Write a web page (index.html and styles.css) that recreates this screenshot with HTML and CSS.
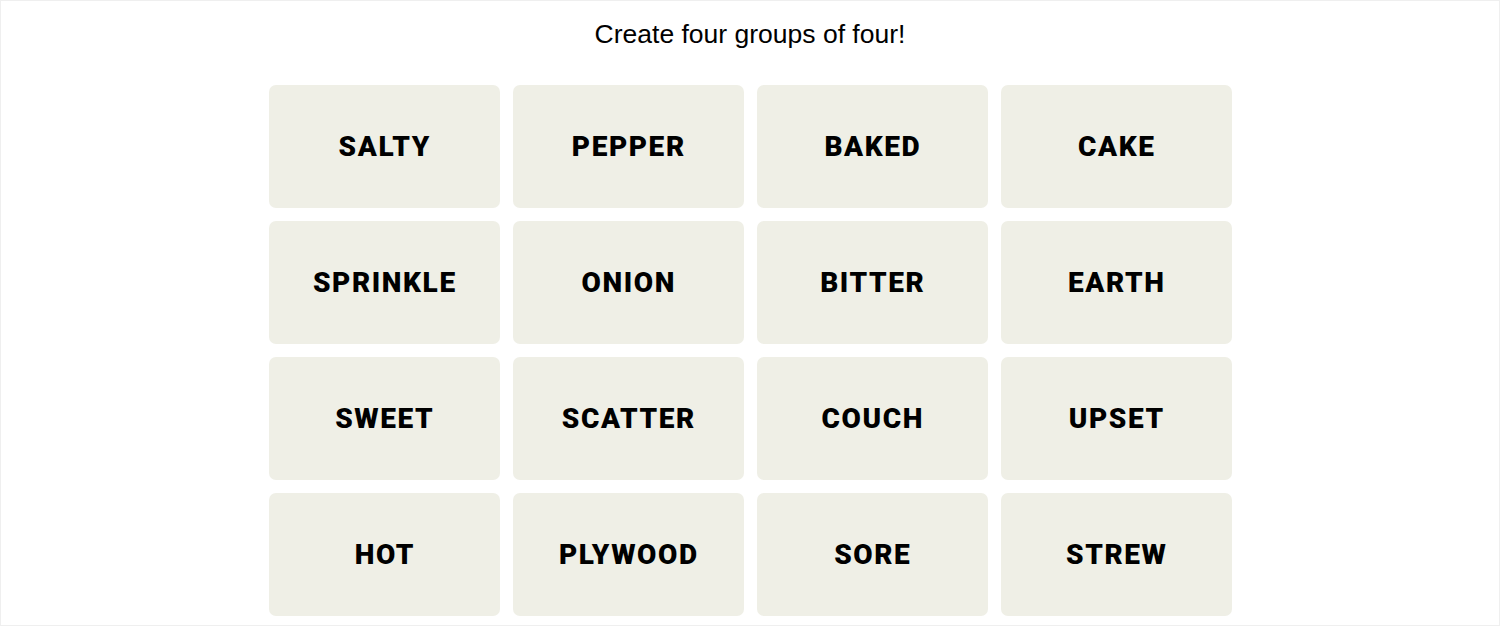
FILE: index.html
```html
<!DOCTYPE html>
<html lang="en">
<head>
<meta charset="utf-8">
<title>Connections</title>
<link rel="stylesheet" href="styles.css">
</head>
<body>
<main class="page">
  <h1 class="prompt">Create four groups of four!</h1>
  <section class="board">
    <button class="tile">SALTY</button>
    <button class="tile">PEPPER</button>
    <button class="tile">BAKED</button>
    <button class="tile">CAKE</button>
    <button class="tile">SPRINKLE</button>
    <button class="tile">ONION</button>
    <button class="tile">BITTER</button>
    <button class="tile">EARTH</button>
    <button class="tile">SWEET</button>
    <button class="tile">SCATTER</button>
    <button class="tile">COUCH</button>
    <button class="tile">UPSET</button>
    <button class="tile">HOT</button>
    <button class="tile">PLYWOOD</button>
    <button class="tile">SORE</button>
    <button class="tile">STREW</button>
  </section>
</main>
</body>
</html>
```
FILE: styles.css
```css
html, body {
  margin: 0;
  padding: 0;
  background: #fff;
}
.page {
  box-sizing: border-box;
  width: 1500px;
  height: 626px;
  border: 1px solid #efefef;
  display: flex;
  flex-direction: column;
  align-items: center;
  overflow: hidden;
}
.prompt {
  margin: 17px 0 0;
  font-family: "Liberation Sans", Arial, sans-serif;
  font-weight: 400;
  font-size: 26.5px;
  line-height: 32px;
  color: #000;
}
.board {
  margin-top: 35px;
  display: grid;
  grid-template-columns: repeat(4, 231px);
  grid-auto-rows: 123px;
  gap: 13px;
}
.tile {
  border: none;
  border-radius: 7px;
  background: #efefe6;
  color: #000;
  font-family: Roboto, "Liberation Sans", Arial, sans-serif;
  font-weight: 900;
  font-size: 28px;
  letter-spacing: 1.6px;
  text-transform: uppercase;
  padding: 0 0 0 1.6px;
  cursor: pointer;
}
```
